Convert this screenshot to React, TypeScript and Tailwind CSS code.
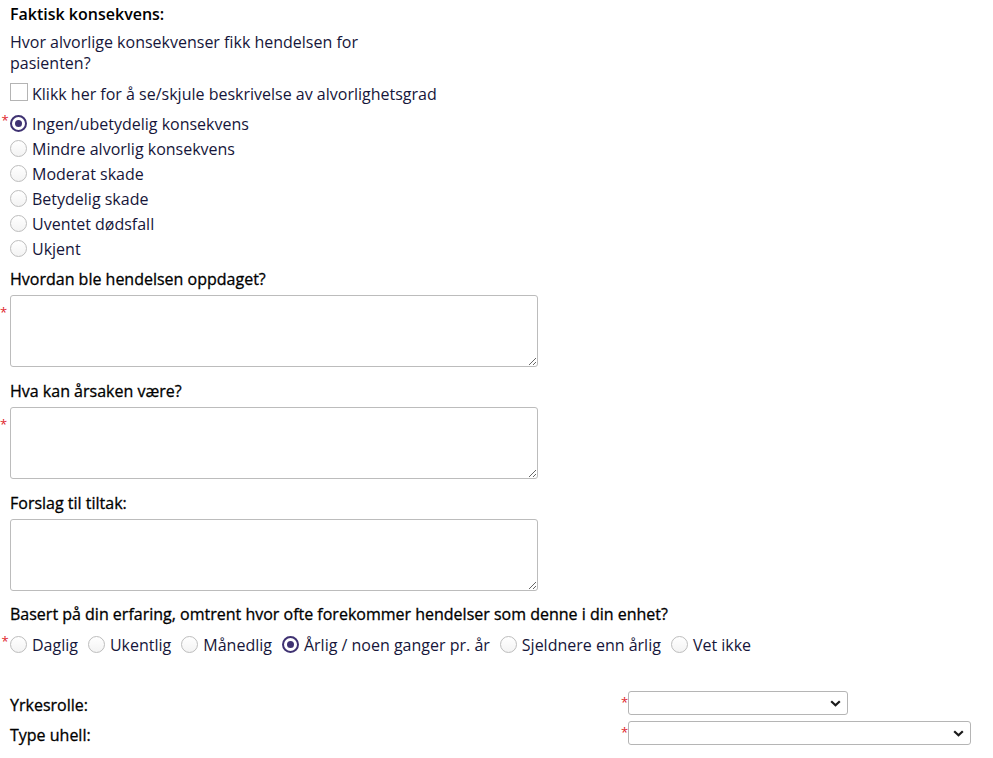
import React, { useState } from 'react';

const severities = [
  'Ingen/ubetydelig konsekvens',
  'Mindre alvorlig konsekvens',
  'Moderat skade',
  'Betydelig skade',
  'Uventet dødsfall',
  'Ukjent',
];

const frequencies = [
  'Daglig',
  'Ukentlig',
  'Månedlig',
  'Årlig / noen ganger pr. år',
  'Sjeldnere enn årlig',
  'Vet ikke',
];

// labels are a touch heavier than the option text
const labelCls = 'pl-[10px] leading-[20px] text-black [-webkit-text-stroke:0.3px_black]';

function Req() {
  return <span className="text-[13px] leading-none text-[#e0242c] -translate-y-[3px]">*</span>;
}

function Radio({ checked, onClick }: { checked: boolean; onClick: () => void }) {
  return (
    <span
      onClick={onClick}
      className={
        checked
          ? 'flex h-[17px] w-[17px] shrink-0 items-center justify-center rounded-full border-2 border-[#3f3272] bg-white'
          : 'flex h-[17px] w-[17px] shrink-0 items-center justify-center rounded-full border border-[#bdbdbd] bg-gradient-to-b from-white to-[#f3f3f3]'
      }
    >
      {checked && <span className="h-[7px] w-[7px] rounded-full bg-[#3f3272]" />}
    </span>
  );
}

function Chevron() {
  return (
    <svg width="11" height="7" viewBox="0 0 11 7" className="shrink-0">
      <path d="M1.2 1.2 L5.5 5.3 L9.8 1.2" fill="none" stroke="#1a1a1a" strokeWidth="2.2" />
    </svg>
  );
}

function Select({ width }: { width: string }) {
  return (
    <div className="flex items-center">
      <span className="w-[7px] text-[13px] leading-none text-[#e0242c] -translate-y-[1px]">*</span>
      <div className={`${width} flex h-[24px] items-center justify-end rounded-[3px] border border-[#b5b5b5] bg-white pr-[6px]`}>
        <Chevron />
      </div>
    </div>
  );
}

function TextBox() {
  return (
    <textarea className="block h-[72px] w-[528px] resize-y rounded-[3px] border border-[#bcbcbc] bg-white p-1 outline-none" />
  );
}

export default function App() {
  const [severity, setSeverity] = useState(0);
  const [frequency, setFrequency] = useState(3);
  const [showInfo, setShowInfo] = useState(false);

  return (
    <div className="min-h-[758px] bg-white pt-[4px] text-[16px] text-[#16163a] [font-family:'Open_Sans',sans-serif]">
      <div className="pl-[10px] leading-[20px] font-semibold text-black">Faktisk konsekvens:</div>

      <div className="mt-[8px] w-[370px] pl-[10px] leading-[21px]">
        Hvor alvorlige konsekvenser fikk hendelsen for pasienten?
      </div>

      <div className="mt-[7px] flex h-[25px] items-center pl-[10px]" onClick={() => setShowInfo(!showInfo)}>
        <span className="mb-[3px] flex h-[18px] w-[18px] shrink-0 items-center justify-center border border-[#b4b4b4] bg-white text-[12px]">
          {showInfo ? '✓' : ''}
        </span>
        <span className="ml-[4px]">Klikk her for å se/skjule beskrivelse av alvorlighetsgrad</span>
      </div>

      <div className="mt-[5px] flex flex-col">
        {severities.map((s, i) => (
          <div key={s} className="flex h-[25px] items-center">
            <span className="flex w-[10px] justify-center">{i === 0 && <Req />}</span>
            <Radio checked={severity === i} onClick={() => setSeverity(i)} />
            <span className="ml-[5px]">{s}</span>
          </div>
        ))}
      </div>

      <div className={`mt-[8px] ${labelCls}`}>Hvordan ble hendelsen oppdaget?</div>
      <div className="mt-[6px] flex">
        <span className="w-[10px] pt-[8px] leading-none"><Req /></span>
        <TextBox />
      </div>

      <div className={`mt-[14px] ${labelCls}`}>Hva kan årsaken være?</div>
      <div className="mt-[6px] flex">
        <span className="w-[10px] pt-[8px] leading-none"><Req /></span>
        <TextBox />
      </div>

      <div className={`mt-[14px] ${labelCls}`}>Forslag til tiltak:</div>
      <div className="mt-[6px] flex">
        <span className="w-[10px]" />
        <TextBox />
      </div>

      <div className={`mt-[13px] ${labelCls}`}>
        Basert på din erfaring, omtrent hvor ofte forekommer hendelser som denne i din enhet?
      </div>
      <div className="mt-[8px] flex h-[25px] items-center">
        <span className="flex w-[10px] justify-center"><Req /></span>
        {frequencies.map((f, i) => (
          <div key={f} className="mr-[10px] flex items-center">
            <Radio checked={frequency === i} onClick={() => setFrequency(i)} />
            <span className="ml-[5px]">{f}</span>
          </div>
        ))}
      </div>

      <div className="mt-[34px] flex flex-col gap-[6px] pl-[10px]">
        <div className="grid h-[24px] grid-cols-[611px_1fr] items-center">
          <span className="translate-y-[2px] text-black [-webkit-text-stroke:0.3px_black]">Yrkesrolle:</span>
          <Select width="w-[220px]" />
        </div>
        <div className="grid h-[24px] grid-cols-[611px_1fr] items-center">
          <span className="translate-y-[2px] text-black [-webkit-text-stroke:0.3px_black]">Type uhell:</span>
          <Select width="w-[343px]" />
        </div>
      </div>
    </div>
  );
}
